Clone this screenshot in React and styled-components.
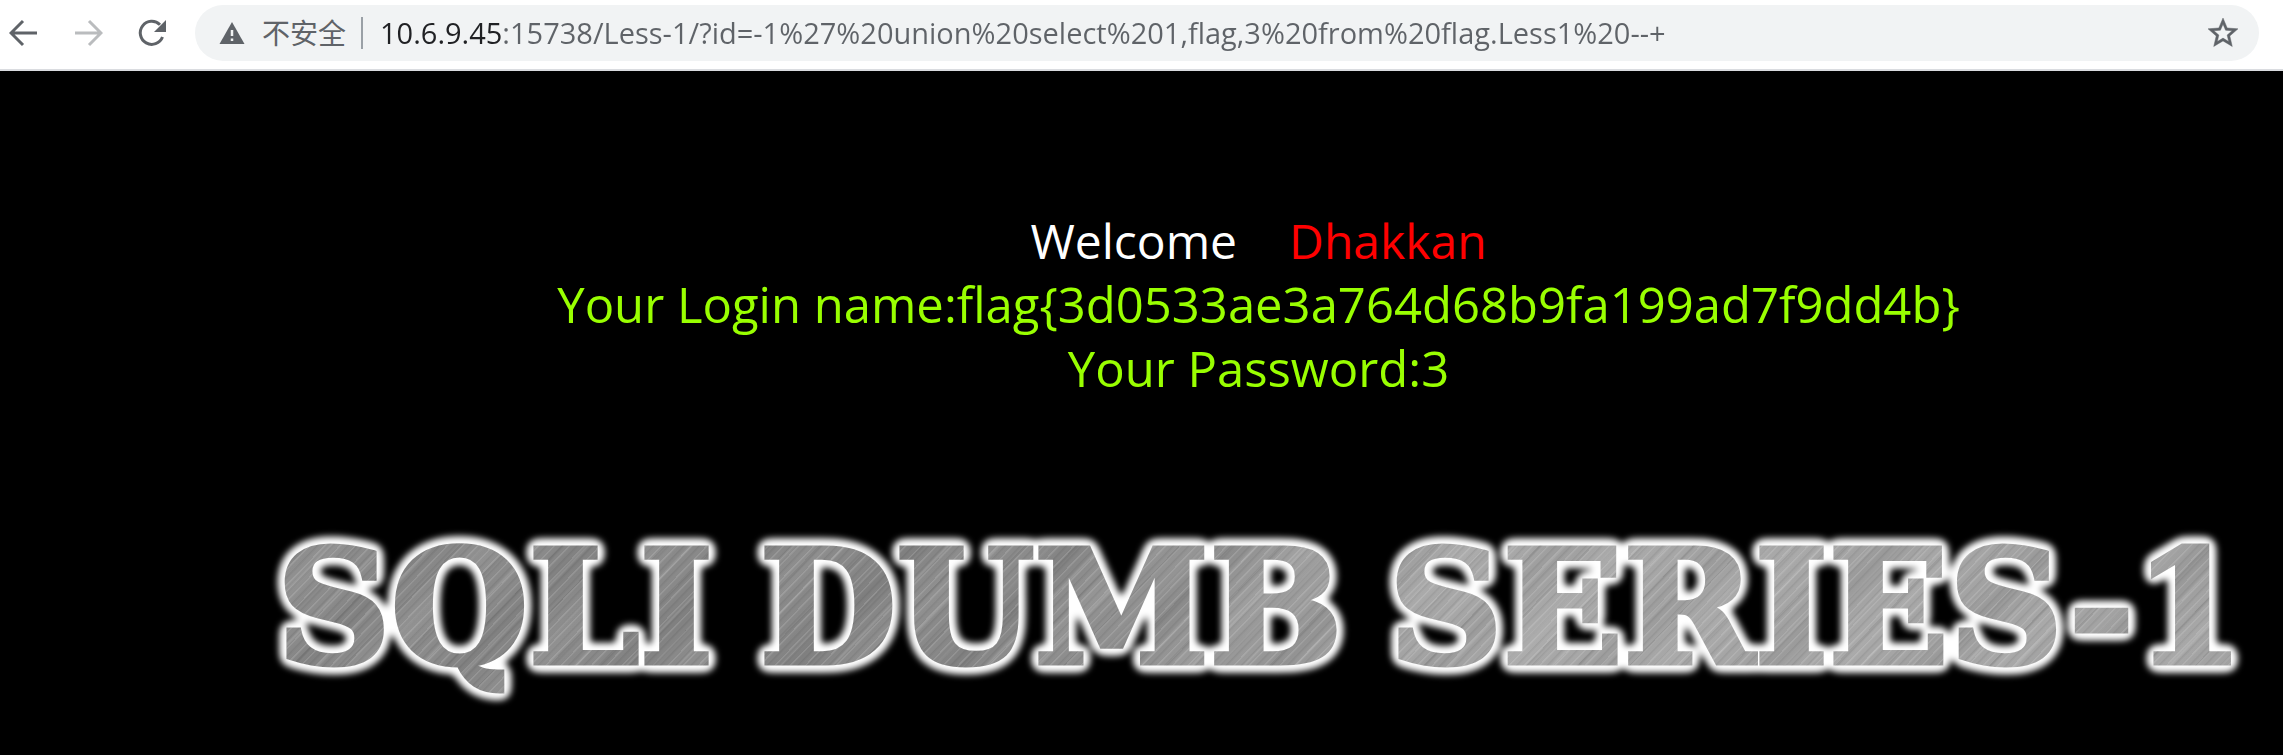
import React from 'react';
import styled, { createGlobalStyle } from 'styled-components';

const uiFont = '"Open Sans", "Noto Sans CJK SC", sans-serif';

const GlobalStyle = createGlobalStyle`
  *, *::before, *::after { box-sizing: border-box; }
  html, body { margin: 0; background: #000; }
  body { font-family: ${uiFont}; }
`;

const Toolbar = styled.header`
  display: flex;
  align-items: center;
  padding: 5px 24px 8px 9px;
  background: #fff;
  border-bottom: 2px solid #dadce0;
`;

const IconButton = styled.button`
  display: flex;
  padding: 0;
  margin-right: ${(p) => p.$gap || 0}px;
  border: 0;
  background: none;
  color: ${(p) => (p.disabled ? '#babcbe' : '#5f6368')};
`;

const AddressBar = styled.form`
  flex: 1;
  display: flex;
  align-items: center;
  height: 56px;
  padding: 0 18px 0 24px;
  border-radius: 28px;
  background: #f1f3f4;
  color: #5f6368;
`;

const Security = styled.button`
  display: flex;
  align-items: center;
  gap: 17px;
  padding: 0 15px 0 0;
  border: 0;
  background: none;
  color: inherit;
  font: 28px/32px ${uiFont};
`;

const Divider = styled.span`
  width: 2px;
  height: 32px;
  margin-right: 17px;
  background: #9aa0a6;
`;

const Url = styled.input`
  flex: 1;
  min-width: 0;
  height: 40px;
  padding: 0;
  border: 0;
  outline: 0;
  background: linear-gradient(90deg, #202124 122px, #5f6368 122px);
  background-clip: text;
  -webkit-background-clip: text;
  color: transparent;
  font: 29px/40px ${uiFont};
`;

const Page = styled.main`
  padding: 139px 0 40px 234px;
  color: #99ff00;
  text-align: center;
`;

const Greeting = styled.p`
  margin: 0;
  color: #fff;
  font-size: 48px;
  line-height: 62px;
`;

const Name = styled.span`
  margin-left: 52px;
  color: #f00;
`;

const Result = styled.p`
  margin: 0;
  font-size: 49px;
  line-height: 64px;
`;

const Banner = styled.h1`
  display: flex;
  justify-content: center;
  gap: 46px;
  margin: 108px 0 0 4px;
  padding: 20px 0;
  font: bold 158px/160px "DejaVu Serif", serif;
  white-space: nowrap;
  color: transparent;
  background:
    repeating-linear-gradient(134deg, #fff2 0 1px, #fff0 2px 5px, #0001 6px, #fff0 8px 11px),
    repeating-linear-gradient(134deg, #0001 0 1px, #0000 3px 17px, #fff2 19px, #0000 21px 37px),
    repeating-linear-gradient(136deg, #0000 0 20px, #0001 45px, #0000 70px, #fff1 95px, #0000 113px),
    linear-gradient(100deg, #8c8c8c 0%, #888 30%, #8c8c8c 40%, #a8a8a8 60%, #a2a2a2 100%);
  background-clip: text;
  -webkit-background-clip: text;
  -webkit-text-stroke: 5px transparent;
  filter: url(#banner-glow);
`;

const Defs = styled.svg`
  display: block;
  width: 0;
  height: 0;
`;

const Back = ({ flip }) => (
  <svg width="30" height="30" viewBox="0 0 30 30" fill="none" stroke="currentColor" strokeWidth="3">
    <path d={flip ? 'M2 15H27M16 3L28 15L16 27' : 'M28 15H3M14 3L2 15L14 27'} />
  </svg>
);

export default function App() {
  return (
    <>
      <GlobalStyle />
      <Toolbar>
        <IconButton type="button" aria-label="后退" $gap={34}><Back /></IconButton>
        <IconButton type="button" aria-label="前进" disabled $gap={34}><Back flip /></IconButton>
        <IconButton type="button" aria-label="重新加载" $gap={28}>
          <svg width="30" height="30" viewBox="0 0 30 30">
            <path d="M25.500 19A11.500 11.500 0 1 1 23 6.800" fill="none" stroke="currentColor" strokeWidth="3" />
            <path d="M29 2V14H17Z" fill="currentColor" />
          </svg>
        </IconButton>
        <AddressBar onSubmit={(e) => e.preventDefault()}>
          <Security type="button">
            <svg width="26" height="24" viewBox="0 0 26 24">
              <path d="M13 1L25.500 23H.5Z" fill="currentColor" />
              <path d="M13 9V15M13 17.500V20" stroke="#f1f3f4" strokeWidth="2.500" />
            </svg>
            不安全
          </Security>
          <Divider />
          <Url
            type="text"
            aria-label="地址"
            spellCheck={false}
            defaultValue="10.6.9.45:15738/Less-1/?id=-1%27%20union%20select%201,flag,3%20from%20flag.Less1%20--+"
          />
          <IconButton type="button" aria-label="收藏">
            <svg width="36" height="36" viewBox="0 0 24 24" fill="currentColor" stroke="currentColor" strokeWidth="0.300">
              <path d="M22 9.240l-7.190-.62L12 2 9.190 8.630 2 9.240l5.460 4.730L5.820 21 12 17.270 18.180 21l-1.630-7.030L22 9.240zM12 15.400l-3.760 2.270 1-4.280-3.320-2.880 4.380-.38L12 6.100l1.710 4.040 4.380.38-3.320 2.880 1 4.280L12 15.400z" />
            </svg>
          </IconButton>
        </AddressBar>
      </Toolbar>
      <Page>
        <Greeting>Welcome<Name>Dhakkan</Name></Greeting>
        <Result>Your Login name:flag{'{'}3d0533ae3a764d68b9fa199ad7f9dd4b{'}'}</Result>
        <Result>Your Password:3</Result>
        <Banner>
          <span>SQLI</span>
          <span>DUMB</span>
          <span>SERIES-1</span>
        </Banner>
      </Page>
      <Defs aria-hidden="true">
        <filter id="banner-glow" x="-2%" y="-10%" width="104%" height="120%" colorInterpolationFilters="sRGB">
          <feGaussianBlur in="SourceAlpha" stdDeviation="5" result="soft" />
          <feComponentTransfer in="soft" result="fat">
            <feFuncR type="linear" slope="0" intercept="1" />
            <feFuncG type="linear" slope="0" intercept="1" />
            <feFuncB type="linear" slope="0" intercept="1" />
            <feFuncA type="linear" slope="24" intercept="-0.800" />
          </feComponentTransfer>
          <feGaussianBlur in="fat" stdDeviation="3" result="halo" />
          <feMerge>
            <feMergeNode in="halo" />
            <feMergeNode in="SourceGraphic" />
          </feMerge>
        </filter>
      </Defs>
    </>
  );
}
